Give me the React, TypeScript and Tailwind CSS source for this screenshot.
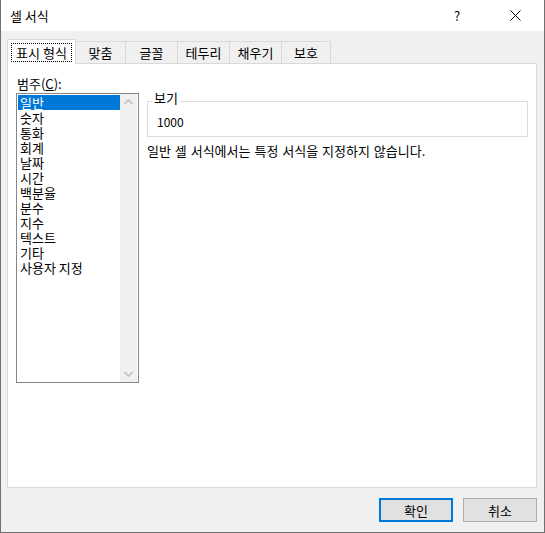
import React from "react";

const font = { fontFamily: '"Noto Sans CJK KR", "Noto Sans", sans-serif' };

const items = ["일반", "숫자", "통화", "회계", "날짜", "시간", "백분율", "분수", "지수", "텍스트", "기타", "사용자 지정"];

export default function App() {
  return (
    <div
      className="w-[545px] h-[533px] bg-[#f0f0f0] border-l border-r border-b border-[#707070] flex flex-col text-[13px] text-black overflow-hidden"
      style={font}
    >
      {/* Title bar */}
      <div className="h-[31px] bg-white flex items-center shrink-0">
        <div className="pl-[9px] text-[13px] leading-[15px] flex-1">셀 서식</div>
        <div className="w-[30px] text-center text-[13px] leading-[15px] mr-[28px]">?</div>
        <div className="w-[30px] flex items-center justify-center mr-[14px]">
          <svg width="11" height="11" viewBox="0 0 11 11">
            <path d="M0.5 0.5 L10.5 10.5 M10.5 0.5 L0.5 10.5" stroke="#000" strokeWidth="1" />
          </svg>
        </div>
      </div>

      {/* Content */}
      <div className="pl-[6px] pr-[7px] pt-[8px] flex flex-col flex-1">
        {/* Tabs */}
        <div className="flex items-end h-[25px] relative z-10">
          <div className="w-[69px] h-[25px] bg-white border border-b-0 border-[#d9d9d9] flex items-start justify-center pt-[3px]">
            <div className="w-[61px] h-[19px] border border-dotted border-black flex items-center justify-center leading-[15px]">
              표시 형식
            </div>
          </div>
          <div className="w-[50px] h-[23px] bg-[#f0f0f0] border-t border-r border-b border-[#d9d9d9] flex items-center justify-center leading-[15px]">맞춤</div>
          <div className="w-[52px] h-[23px] bg-[#f0f0f0] border-t border-r border-b border-[#d9d9d9] flex items-center justify-center leading-[15px]">글꼴</div>
          <div className="w-[52px] h-[23px] bg-[#f0f0f0] border-t border-r border-b border-[#d9d9d9] flex items-center justify-center leading-[15px]">테두리</div>
          <div className="w-[52px] h-[23px] bg-[#f0f0f0] border-t border-r border-b border-[#d9d9d9] flex items-center justify-center leading-[15px]">채우기</div>
          <div className="w-[49px] h-[23px] bg-[#f0f0f0] border-t border-r border-b border-[#d9d9d9] flex items-center justify-center leading-[15px]">보호</div>
        </div>

        {/* Panel */}
        <div className="-mt-px w-[530px] h-[425px] bg-white border border-[#d9d9d9] flex pl-[8px] pt-[12px]">
          {/* Left column */}
          <div className="flex flex-col">
            <div className="leading-[15px] h-[15px] pl-px">
              범주(<span className="underline">C</span>):
            </div>
            <div className="mt-[2px] w-[123px] h-[290px] border border-[#828790] flex">
              <div className="flex-1 flex flex-col pt-px pl-px">
                {items.map((it, i) => (
                  <div
                    key={it}
                    className={
                      i === 0
                        ? "h-[15px] leading-[15px] bg-[#0078d7] text-white pl-[2px]"
                        : "h-[15px] leading-[15px] pl-[2px]"
                    }
                  >
                    {it}
                  </div>
                ))}
              </div>
              <div className="w-[17px] bg-[#f0f0f0] flex flex-col justify-between items-center py-[5px] mr-px">
                <svg width="9" height="6" viewBox="0 0 9 6">
                  <path d="M0.5 5 L4.5 1 L8.5 5" stroke="#c0c0c0" strokeWidth="1.6" fill="none" />
                </svg>
                <svg width="9" height="6" viewBox="0 0 9 6">
                  <path d="M0.5 1 L4.5 5 L8.5 1" stroke="#c0c0c0" strokeWidth="1.6" fill="none" />
                </svg>
              </div>
            </div>
          </div>

          {/* Right column */}
          <div className="ml-[8px] flex flex-col">
            <div className="mt-[25px] w-[381px] h-[36px] border border-[#dcdcdc] flex flex-col items-start pl-[9px]">
              <div className="-mt-[12px] -ml-[5px] h-[15px] leading-[15px] bg-white px-[2px]">보기</div>
              <div className="mt-[9px] leading-[15px] text-[12px]">1000</div>
            </div>
            <div className="mt-[6px] leading-[15px] [word-spacing:1px]">일반 셀 서식에서는 특정 서식을 지정하지 않습니다.</div>
          </div>
        </div>

        {/* Buttons */}
        <div className="flex justify-end gap-[10px] pt-[10px] w-[530px]">
          <button className="w-[74px] h-[24px] bg-[#e1e1e1] border-2 border-[#0078d7] flex items-center justify-center leading-[15px]">
            확인
          </button>
          <button className="w-[74px] h-[24px] bg-[#e1e1e1] border border-[#adadad] flex items-center justify-center leading-[15px]">
            취소
          </button>
        </div>
      </div>
    </div>
  );
}
